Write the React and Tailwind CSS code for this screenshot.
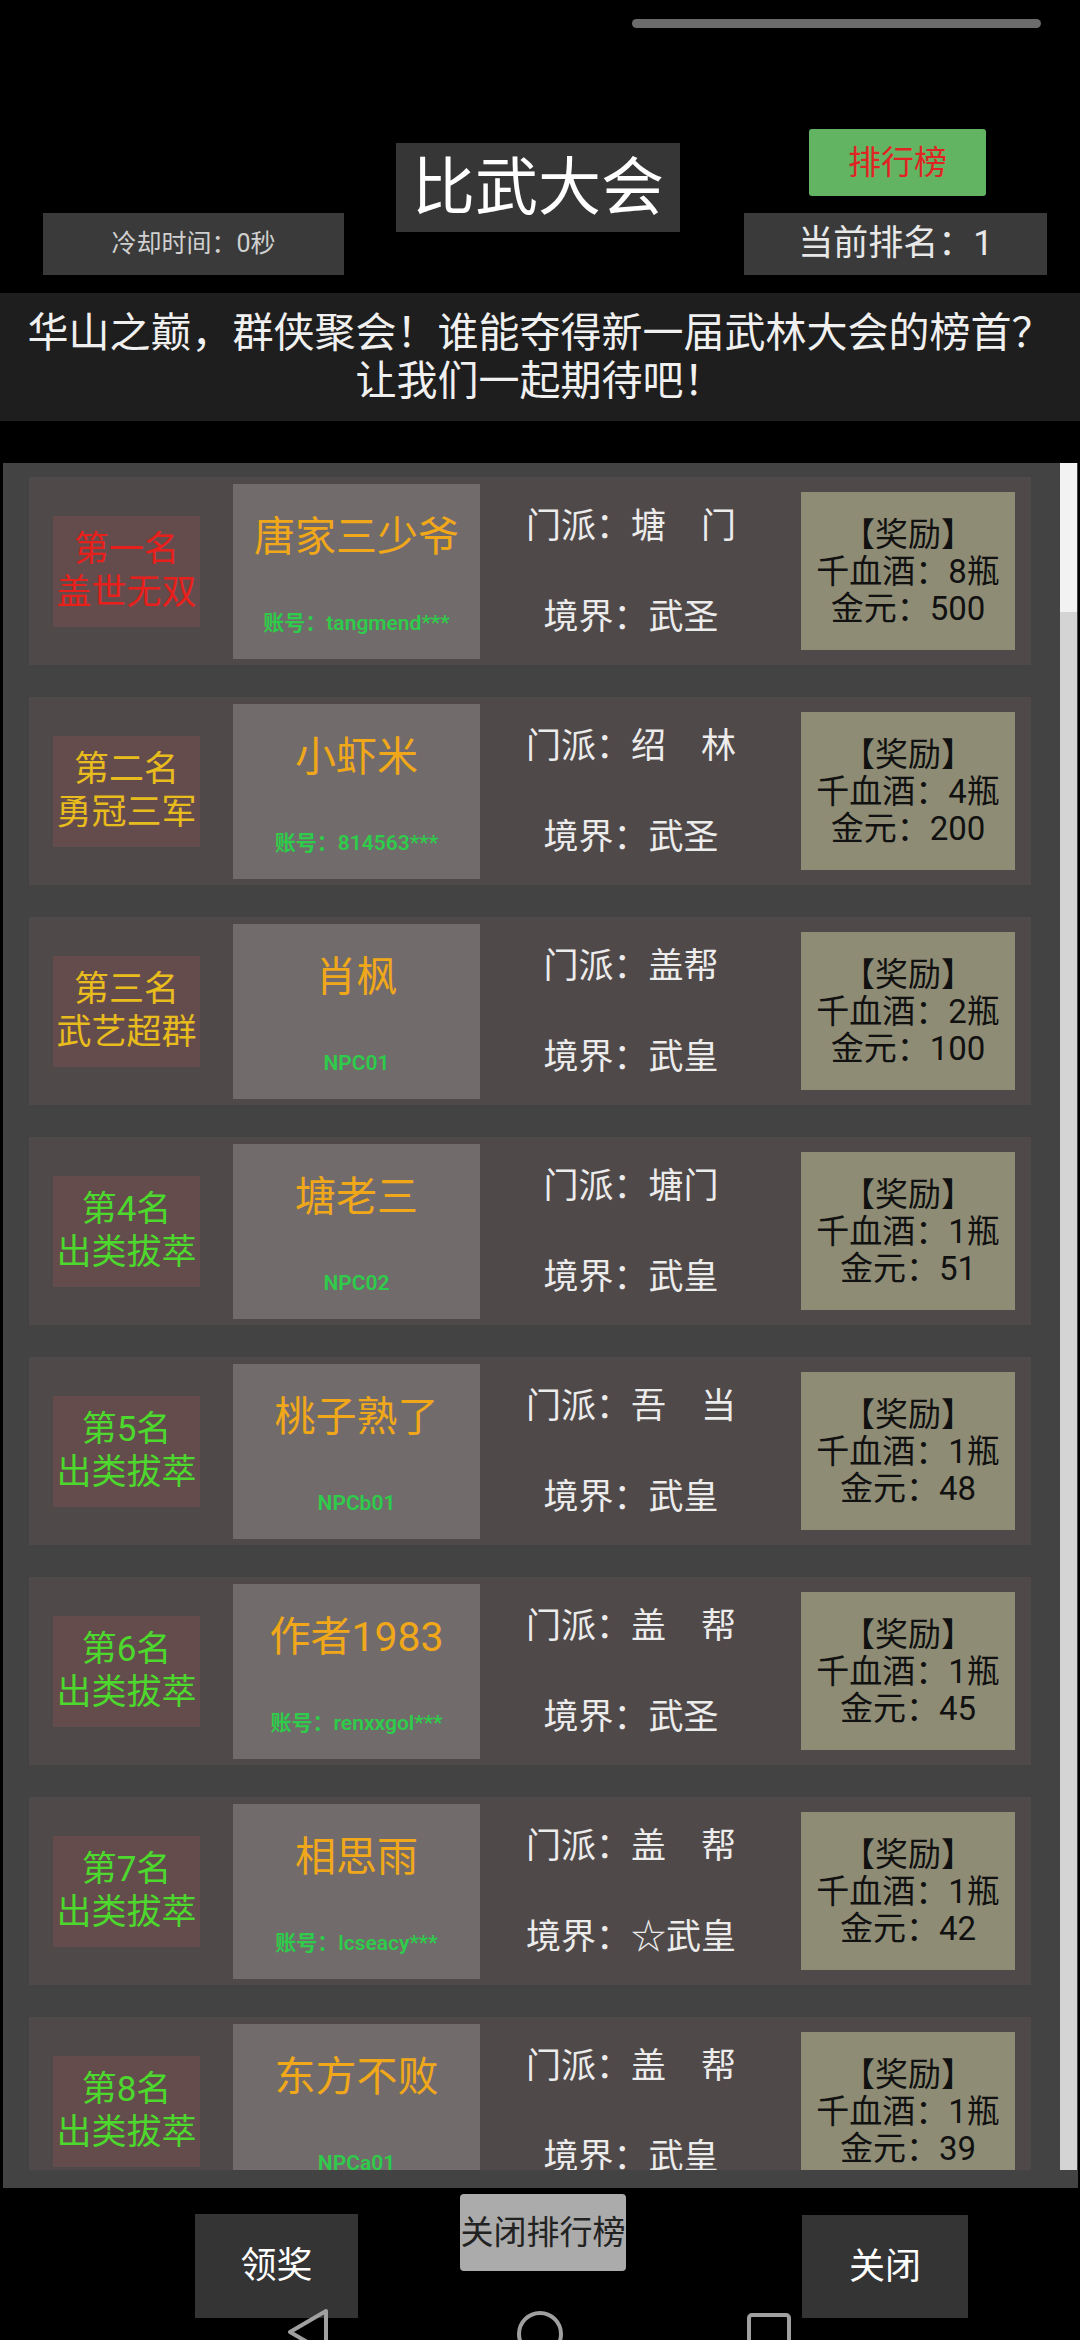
import React from 'react';

const FONT = "font-['Roboto','Noto_Sans_CJK_SC',sans-serif]";

const players = [
    { rank: '第一名', title: '盖世无双', tone: 'text-[#e8201c]', name: '唐家三少爷', account: '账号：tangmend***', sect: '门派：塘　门', realm: '境界：武圣', wine: 8, gold: 500 },
    { rank: '第二名', title: '勇冠三军', tone: 'text-[#e8bc1c]', name: '小虾米', account: '账号：814563***', sect: '门派：绍　林', realm: '境界：武圣', wine: 4, gold: 200 },
    { rank: '第三名', title: '武艺超群', tone: 'text-[#e8bc1c]', name: '肖枫', account: 'NPC01', sect: '门派：盖帮', realm: '境界：武皇', wine: 2, gold: 100 },
    { rank: '第4名', title: '出类拔萃', tone: 'text-[#4cd82c]', name: '塘老三', account: 'NPC02', sect: '门派：塘门', realm: '境界：武皇', wine: 1, gold: 51 },
    { rank: '第5名', title: '出类拔萃', tone: 'text-[#4cd82c]', name: '桃子熟了', account: 'NPCb01', sect: '门派：吾　当', realm: '境界：武皇', wine: 1, gold: 48 },
    { rank: '第6名', title: '出类拔萃', tone: 'text-[#4cd82c]', name: '作者1983', account: '账号：renxxgol***', sect: '门派：盖　帮', realm: '境界：武圣', wine: 1, gold: 45 },
    { rank: '第7名', title: '出类拔萃', tone: 'text-[#4cd82c]', name: '相思雨', account: '账号：lcseacy***', sect: '门派：盖　帮', realm: '境界：☆武皇', wine: 1, gold: 42 },
    { rank: '第8名', title: '出类拔萃', tone: 'text-[#4cd82c]', name: '东方不败', account: 'NPCa01', sect: '门派：盖　帮', realm: '境界：武皇', wine: 1, gold: 39 },
];

function PlayerCard({ p }) {
    return (
        <div className="flex items-center w-[1002px] h-[188px] shrink-0 bg-[#504949]">
            {/* rank badge */}
            <div className={`ml-[24px] w-[147px] h-[111px] flex flex-col items-center justify-center bg-[#654c4c] text-[35px] leading-[43px] ${p.tone}`}>
                <div>{p.rank}</div>
                <div className="whitespace-nowrap">{p.title}</div>
            </div>

            {/* name */}
            <div className="ml-[33px] w-[247px] h-[175px] flex flex-col items-center bg-[#716b6b]">
                <div className="mt-[29px] h-[48px] leading-[48px] text-[41px] text-[#f0a81a] whitespace-nowrap">{p.name}</div>
                <div className="mt-[50px] h-[24px] leading-[24px] text-[21px] font-semibold text-[#2ecc4a] whitespace-nowrap">{p.account}</div>
            </div>

            {/* sect / realm */}
            <div className="w-[302px] self-stretch flex flex-col items-center pt-[28px] gap-[47px] text-[35px] leading-[44px] text-[#ececec]">
                <div className="whitespace-nowrap">{p.sect}</div>
                <div className="whitespace-nowrap">{p.realm}</div>
            </div>

            {/* reward */}
            <div className="ml-[19px] w-[214px] h-[158px] flex flex-col items-center justify-center bg-[#8e8c74] text-[33px] leading-[37px] text-[#111]">
                <div>【奖励】</div>
                <div>千血酒：{p.wine}瓶</div>
                <div>金元：{p.gold}</div>
            </div>
        </div>
    );
}

function NavIcons() {
    return (
        <div className="absolute left-0 top-[2306px] w-[1080px] h-[34px] pointer-events-none">
            <svg width="1080" height="34" viewBox="0 2306 1080 34" fill="none" stroke="#a0a0a0" strokeWidth="4" strokeLinejoin="round">
                <path d="M326 2311 L290 2332 L326 2353 Z" />
                <circle cx="540" cy="2334" r="21" />
                <rect x="749" y="2315" width="40" height="40" rx="3" />
            </svg>
        </div>
    );
}

export default function App() {
    return (
        <div className={`relative w-[1080px] h-[2340px] overflow-hidden bg-black ${FONT}`}>
            {/* status pill */}
            <div className="mt-[19px] ml-[632px] w-[409px] h-[9px] rounded-full bg-[#6b6b6b]" />

            {/* header */}
            <div className="mt-[101px] flex items-start h-[146px]">
                <div className="self-end ml-[43px] w-[301px] h-[62px] flex items-center justify-center bg-[#3a3a3a] text-[25px] text-[#d0d0d0]">
                    冷却时间：0秒
                </div>
                <div className="mt-[14px] ml-[52px] w-[284px] h-[89px] flex items-center justify-center bg-[#363636] text-[63px] leading-none text-white">
                    比武大会
                </div>
                <div className="ml-[64px] w-[303px] flex flex-col">
                    <div className="ml-[65px] w-[177px] h-[67px] flex items-center justify-center rounded-[3px] bg-[#62b462] text-[33px] text-[#e02424]">
                        排行榜
                    </div>
                    <div className="mt-[17px] h-[62px] flex items-center justify-center bg-[#3a3a3a] text-[35px] text-[#e8e8e8]">
                        当前排名：1
                    </div>
                </div>
            </div>

            {/* announcement */}
            <div className="mt-[18px] h-[128px] flex flex-col items-center justify-center bg-[#1e1e1e] text-[41px] leading-[48px] text-[#f0f0f0] text-center">
                <div className="whitespace-nowrap">华山之巅，群侠聚会！谁能夺得新一届武林大会的榜首？</div>
                <div>让我们一起期待吧！</div>
            </div>

            {/* ranking list */}
            <div className="mt-[42px] ml-[3px] w-[1075px] pb-[18px] bg-[#434343]">
                <div className="relative h-[1707px] overflow-hidden">
                    <div className="pl-[26px] pt-[14px] flex flex-col gap-[32px]">
                        {players.map((p, i) => (
                            <PlayerCard key={i} p={p} />
                        ))}
                    </div>
                    <div className="absolute top-0 right-[1px] w-[17px] h-full flex flex-col bg-[#d4d4d4]">
                        <div className="h-[149px] bg-[#f2f2f2]" />
                    </div>
                </div>
            </div>

            {/* bottom buttons */}
            <div className="flex items-start">
                <div className="mt-[26px] ml-[195px] w-[163px] h-[104px] flex items-center justify-center bg-[#343434] text-[36px] text-white">
                    领奖
                </div>
                <div className="mt-[6px] ml-[102px] w-[166px] h-[77px] flex items-center justify-center rounded-[4px] bg-[#ababab] text-[33px] text-[#222] whitespace-nowrap">
                    关闭排行榜
                </div>
                <div className="mt-[27px] ml-[176px] w-[166px] h-[103px] flex items-center justify-center bg-[#343434] text-[36px] text-white">
                    关闭
                </div>
            </div>

            <NavIcons />
        </div>
    );
}
